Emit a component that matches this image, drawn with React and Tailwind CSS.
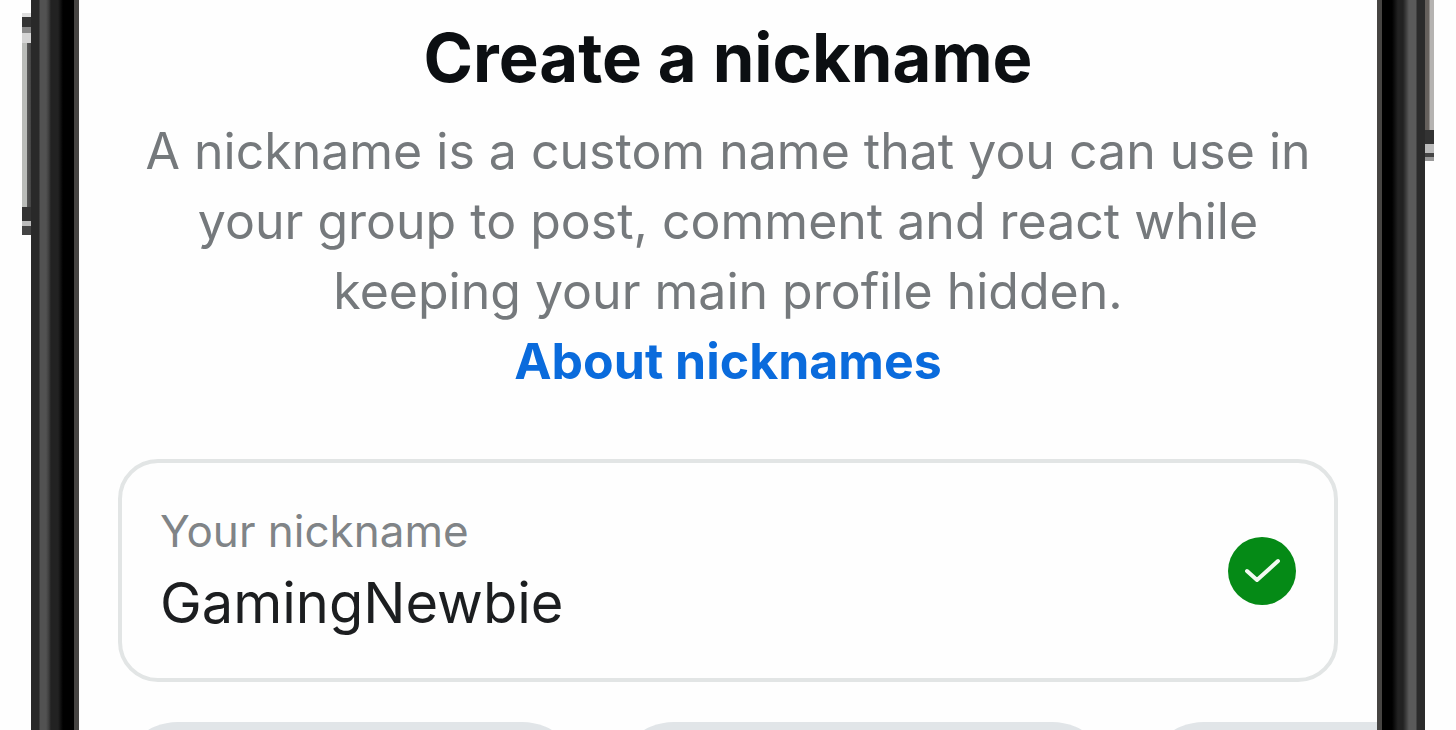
import React, { useState } from 'react';

const suggestionWidths = ['w-[464px]', 'w-[498px]', 'w-[480px]'];

const CheckBadge = () => (
  <svg viewBox="0 0 68 68" className="size-[68px] shrink-0" role="img" aria-label="Available">
    <circle cx="34" cy="34" r="34" fill="#058a16" />
    <path
      d="M19 34 L29 43 L50 24"
      fill="none"
      stroke="#f2faf2"
      strokeWidth="4"
      strokeLinecap="round"
      strokeLinejoin="round"
    />
  </svg>
);

const App = () => {
  const [nickname, setNickname] = useState('GamingNewbie');

  return (
    <div className="flex h-screen overflow-hidden bg-[#fefefe] px-[22px] font-[Inter,sans-serif]">
      {/* volume button */}
      <div className="mt-[13px] flex h-[222px] w-[9px] shrink-0 flex-col bg-[linear-gradient(90deg,#b9bbb8_50%,#555_60%,#444)]">
        <div className="h-1 bg-[#ddd]" />
        <div className="h-[10px] bg-[#333]" />
        <div className="h-[6px] bg-[#888]" />
        <div className="h-[10px] bg-[#d4d4d4]" />
        <div className="flex-1" />
        <div className="h-[14px] bg-[#333]" />
        <div className="h-[5px] bg-[#bbb]" />
        <div className="h-[9px] bg-[#444]" />
      </div>
      <div className="w-12 shrink-0 bg-[linear-gradient(90deg,#292929_0_8px,#525252_9px_15px,#3c3c3c_18px,#222_20px_27px,#000_32px_43px,#464442_43px)]" />

      <main className="flex min-w-0 flex-1 flex-col overflow-hidden px-[39px] pt-[18px]">
        <h1 className="text-center text-[67px] leading-[80px] font-bold text-[#0c0f12]">
          Create a nickname
        </h1>
        <p className="mt-[18px] shrink-0 text-center text-[50px] leading-[70px] text-[#75797c]">
          A nickname is a custom name that you can use in your group to post, comment and react while
          keeping your main profile hidden.
        </p>
        <a href="#about" className="shrink-0 text-center text-[50px] leading-[70px] font-bold text-[#0a6bdc]">
          About nicknames
        </a>

        <div className="mt-[63px] flex h-[223px] shrink-0 items-center justify-between rounded-[40px] border-4 border-[#e2e5e5] px-[38px]">
          <div className="flex min-w-0 flex-1 flex-col pt-1">
            <label htmlFor="nickname" className="text-[44px] leading-[60px] text-[#808487]">
              Your nickname
            </label>
            <input
              id="nickname"
              type="text"
              value={nickname}
              onChange={(e) => setNickname(e.target.value)}
              className="h-[84px] w-full bg-transparent text-[56px] text-[#1c1e20] outline-none"
            />
          </div>
          <CheckBadge />
        </div>

        {/* suggestions row, scrolls sideways */}
        <div className="-mr-[39px] mt-10 flex shrink-0 gap-8 overflow-hidden">
          {suggestionWidths.map((width) => (
            <button
              key={width}
              type="button"
              aria-label="Suggested nickname"
              className={`h-[120px] shrink-0 rounded-full bg-[#e1e5e8] ${width}`}
            />
          ))}
        </div>
      </main>

      <div className="w-12 shrink-0 bg-[linear-gradient(270deg,#2b2b2b_0_8px,#5a5a5a_9px_16px,#3c3c3c_19px,#222_22px_27px,#000_33px_43px,#464442_43px)]" />
      {/* power button */}
      <div className="flex h-[161px] w-[9px] shrink-0 flex-col bg-[linear-gradient(90deg,#66615d_40%,#b5b3b1_60%)]">
        <div className="flex-1" />
        <div className="h-[14px] bg-[#333]" />
        <div className="h-[9px] bg-[#bbb]" />
        <div className="h-1 bg-[#444]" />
        <div className="h-1 bg-[#999]" />
      </div>
    </div>
  );
};

export default App;
